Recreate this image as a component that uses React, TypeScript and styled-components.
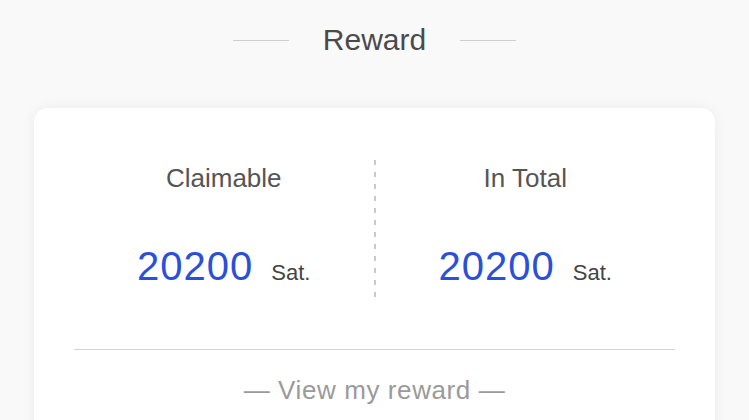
import React from 'react';
import styled, { createGlobalStyle } from 'styled-components';

const GlobalStyle = createGlobalStyle`
    html, body {
        margin: 0;
        padding: 0;
        background: #f9f9f9;
        font-family: 'Liberation Sans', Arial, sans-serif;
    }
`;

const Page = styled.div`
    display: flex;
    flex-direction: column;
    padding: 0 34px;
`;

const Header = styled.div`
    display: flex;
    align-items: center;
    justify-content: center;
    gap: 34px;
    height: 80px;
    margin-bottom: 28px;
`;

const HeaderLine = styled.span`
    width: 56px;
    height: 1px;
    background: #cfcfcf;
`;

const Title = styled.h1`
    margin: 0;
    font-size: 30px;
    font-weight: 400;
    color: #4a4a4a;
    line-height: 40px;
`;

const Card = styled.div`
    background: #fff;
    border-radius: 14px;
    box-shadow: 0 0 14px rgba(0, 0, 0, 0.06);
    padding: 0 40px;
    height: 360px;
`;

const Stats = styled.div`
    display: flex;
    padding: 52px 0;
    border-bottom: 1px solid #d4d4d4;
`;

const Column = styled.div`
    flex: 1;
    height: 137px;
    display: flex;
    flex-direction: column;
    align-items: center;
`;

const Divider = styled.div`
    width: 2px;
    height: 137px;
    background: linear-gradient(#c9c9c9 0 5px, transparent 5px 12px) left top / 2px 12px repeat-y;
`;

const Label = styled.div`
    font-size: 26px;
    line-height: 36px;
    color: #555;
`;

const ValueRow = styled.div`
    display: flex;
    align-items: baseline;
    gap: 18px;
    margin-top: 46px;
    line-height: 48px;
`;

const Amount = styled.span`
    font-size: 40px;
    letter-spacing: 1px;
    color: #2b50d8;
`;

const Unit = styled.span`
    font-size: 22px;
    color: #444;
`;

const Footer = styled.div`
    display: flex;
    justify-content: center;
    padding-top: 25px;
`;

const ViewLink = styled.a`
    font-size: 26px;
    letter-spacing: 0.6px;
    line-height: 30px;
    color: #9a9a9a;
    text-decoration: none;
    cursor: pointer;
`;

const stats = [
    { label: 'Claimable', amount: 20200 },
    { label: 'In Total', amount: 20200 },
];

export default function App() {
    return (
        <>
            <GlobalStyle />
            <Page>
                <Header>
                    <HeaderLine />
                    <Title>Reward</Title>
                    <HeaderLine />
                </Header>
                <Card>
                    <Stats>
                        {stats.map((s, i) => (
                            <React.Fragment key={s.label}>
                                {i > 0 && <Divider />}
                                <Column>
                                    <Label>{s.label}</Label>
                                    <ValueRow>
                                        <Amount>{s.amount}</Amount>
                                        <Unit>Sat.</Unit>
                                    </ValueRow>
                                </Column>
                            </React.Fragment>
                        ))}
                    </Stats>
                    <Footer>
                        <ViewLink>— View my reward —</ViewLink>
                    </Footer>
                </Card>
            </Page>
        </>
    );
}
